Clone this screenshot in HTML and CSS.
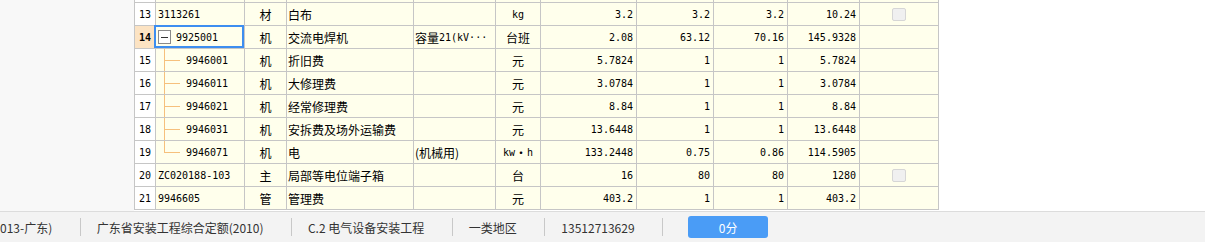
FILE: index.html
```html
<!DOCTYPE html>
<html lang="zh-CN">
<head>
<meta charset="utf-8">
<title>材料表</title>
<link rel="stylesheet" href="styles.css">
</head>
<body>
<div class="main">
  <div class="gutter"></div>
  <div class="grid">
    <!-- row 12 (cropped) -->
    <div class="c rn"></div><div class="c"></div><div class="c"></div><div class="c"></div><div class="c"></div><div class="c"></div><div class="c"></div><div class="c"></div><div class="c"></div><div class="c"></div><div class="c"></div>
    <!-- 13 -->
    <div class="c rn m">13</div><div class="c code m">3113261</div><div class="c ctr">材</div><div class="c name">白布</div><div class="c spec"></div><div class="c ctr m">kg</div><div class="c num m">3.2</div><div class="c num m">3.2</div><div class="c num m">3.2</div><div class="c num m">10.24</div><div class="c ctr"><span class="cb"></span></div>
    <!-- 14 -->
    <div class="c rn cur m">14</div><div class="c code sel"><svg class="tog" width="13" height="14" viewBox="0 0 13 14"><rect x="0.5" y="0.5" width="12" height="13" fill="#fff" stroke="#8a8a8a"/><rect x="3" y="7" width="7" height="1" fill="#333"/></svg><span class="m">9925001</span></div><div class="c ctr">机</div><div class="c name">交流电焊机</div><div class="c spec">容量<span class="m">21(kV···</span></div><div class="c ctr">台班</div><div class="c num m">2.08</div><div class="c num m">63.12</div><div class="c num m">70.16</div><div class="c num m">145.9328</div><div class="c"></div>
    <!-- 15 -->
    <div class="c rn m">15</div><div class="c code child m">9946001</div><div class="c ctr">机</div><div class="c name">折旧费</div><div class="c spec"></div><div class="c ctr">元</div><div class="c num m">5.7824</div><div class="c num m">1</div><div class="c num m">1</div><div class="c num m">5.7824</div><div class="c"></div>
    <!-- 16 -->
    <div class="c rn m">16</div><div class="c code child m">9946011</div><div class="c ctr">机</div><div class="c name">大修理费</div><div class="c spec"></div><div class="c ctr">元</div><div class="c num m">3.0784</div><div class="c num m">1</div><div class="c num m">1</div><div class="c num m">3.0784</div><div class="c"></div>
    <!-- 17 -->
    <div class="c rn m">17</div><div class="c code child m">9946021</div><div class="c ctr">机</div><div class="c name">经常修理费</div><div class="c spec"></div><div class="c ctr">元</div><div class="c num m">8.84</div><div class="c num m">1</div><div class="c num m">1</div><div class="c num m">8.84</div><div class="c"></div>
    <!-- 18 -->
    <div class="c rn m">18</div><div class="c code child m">9946031</div><div class="c ctr">机</div><div class="c name">安拆费及场外运输费</div><div class="c spec"></div><div class="c ctr">元</div><div class="c num m">13.6448</div><div class="c num m">1</div><div class="c num m">1</div><div class="c num m">13.6448</div><div class="c"></div>
    <!-- 19 -->
    <div class="c rn m">19</div><div class="c code child last m">9946071</div><div class="c ctr">机</div><div class="c name">电</div><div class="c spec">(机械用)</div><div class="c ctr"><span class="m">kw</span>・<span class="m">h</span></div><div class="c num m">133.2448</div><div class="c num m">0.75</div><div class="c num m">0.86</div><div class="c num m">114.5905</div><div class="c"></div>
    <!-- 20 -->
    <div class="c rn m">20</div><div class="c code m">ZC020188-103</div><div class="c ctr">主</div><div class="c name">局部等电位端子箱</div><div class="c spec"></div><div class="c ctr">台</div><div class="c num m">16</div><div class="c num m">80</div><div class="c num m">80</div><div class="c num m">1280</div><div class="c ctr"><span class="cb"></span></div>
    <!-- 21 -->
    <div class="c rn m">21</div><div class="c code m">9946605</div><div class="c ctr">管</div><div class="c name">管理费</div><div class="c spec"></div><div class="c ctr">元</div><div class="c num m">403.2</div><div class="c num m">1</div><div class="c num m">1</div><div class="c num m">403.2</div><div class="c"></div>
  </div>
</div>
<div class="status">
  <span class="item first">013-广东)</span><span class="sep"></span>
  <span class="item">广东省安装工程综合定额(2010)</span><span class="sep"></span>
  <span class="item">C.2 电气设备安装工程</span><span class="sep"></span>
  <span class="item">一类地区</span><span class="sep"></span>
  <span class="item">13512713629</span><span class="sep"></span>
  <span class="btn">0分</span>
</div>
</body>
</html>
```
FILE: styles.css
```css
html, body { margin: 0; padding: 0; }
body {
  width: 1205px;
  height: 242px;
  overflow: hidden;
  background: #fff;
  font-family: "Noto Sans CJK SC", "Noto Sans", sans-serif;
}
.main {
  display: flex;
  align-items: flex-start;
  height: 211px;
  overflow: hidden;
}
.gutter {
  flex: none;
  width: 134px;
  height: 211px;
  background: #f8f8f8;
}
.grid {
  display: grid;
  grid-template-columns: 21px 89px 42px 127px 82px 45px 96px 77px 74px 72px 79px;
  grid-auto-rows: 23px;
  margin-top: -20px;
  border-left: 1px solid #c6c6c6;
}
.c {
  box-sizing: border-box;
  border-right: 1px solid #c6c6c6;
  border-bottom: 1px solid #c6c6c6;
  background: #ffffec;
  display: flex;
  align-items: center;
  font-size: 12px;
  color: #000;
  white-space: nowrap;
  overflow: hidden;
}
.m {
  font-family: "DejaVu Sans Mono", "Liberation Mono", monospace;
  font-size: 10px;
}
.rn { background: #fff; justify-content: center; }
.rn.cur { background: #fce3c3; font-weight: bold; }
.code { padding-left: 2px; }
.ctr { justify-content: center; }
.name { padding-left: 1px; }
.spec { padding-left: 1px; }
.num { justify-content: flex-end; padding-right: 3px; }
.child {
  padding-left: 30px;
  background:
    linear-gradient(#f6c07c, #f6c07c) 8px 0 / 1px 100% no-repeat,
    linear-gradient(#f6c07c, #f6c07c) 8px 11px / 16px 1px no-repeat,
    #ffffec;
}
.child.last {
  background:
    linear-gradient(#f6c07c, #f6c07c) 8px 0 / 1px 12px no-repeat,
    linear-gradient(#f6c07c, #f6c07c) 8px 11px / 16px 1px no-repeat,
    #ffffec;
}
.sel { position: relative; overflow: visible; z-index: 1; }
.sel::after {
  content: "";
  position: absolute;
  top: -1px;
  left: -2px;
  right: 0;
  bottom: 0;
  border: 2px solid #3d8ef0;
}
.tog { flex: none; margin-right: 5px; display: block; }
.cb {
  display: block;
  box-sizing: border-box;
  width: 14px;
  height: 13px;
  border: 1px solid #d6d6d6;
  border-radius: 2px;
  background: #f0f0f0;
}
.status {
  height: 30px;
  border-top: 1px solid #dcdcdc;
  background: #f3f3f3;
  display: flex;
  align-items: center;
  font-size: 12px;
  color: #333;
  white-space: nowrap;
}
.item { padding: 0 27.5px 0 16px; }
.item.first { padding-left: 0; }
.sep {
  flex: none;
  width: 1px;
  height: 18px;
  background: #c8c8c8;
}
.btn {
  margin-left: 25px;
  width: 80px;
  height: 22px;
  border-radius: 3px;
  background: #4a9cf6;
  color: #fff;
  display: flex;
  align-items: center;
  justify-content: center;
}
```
